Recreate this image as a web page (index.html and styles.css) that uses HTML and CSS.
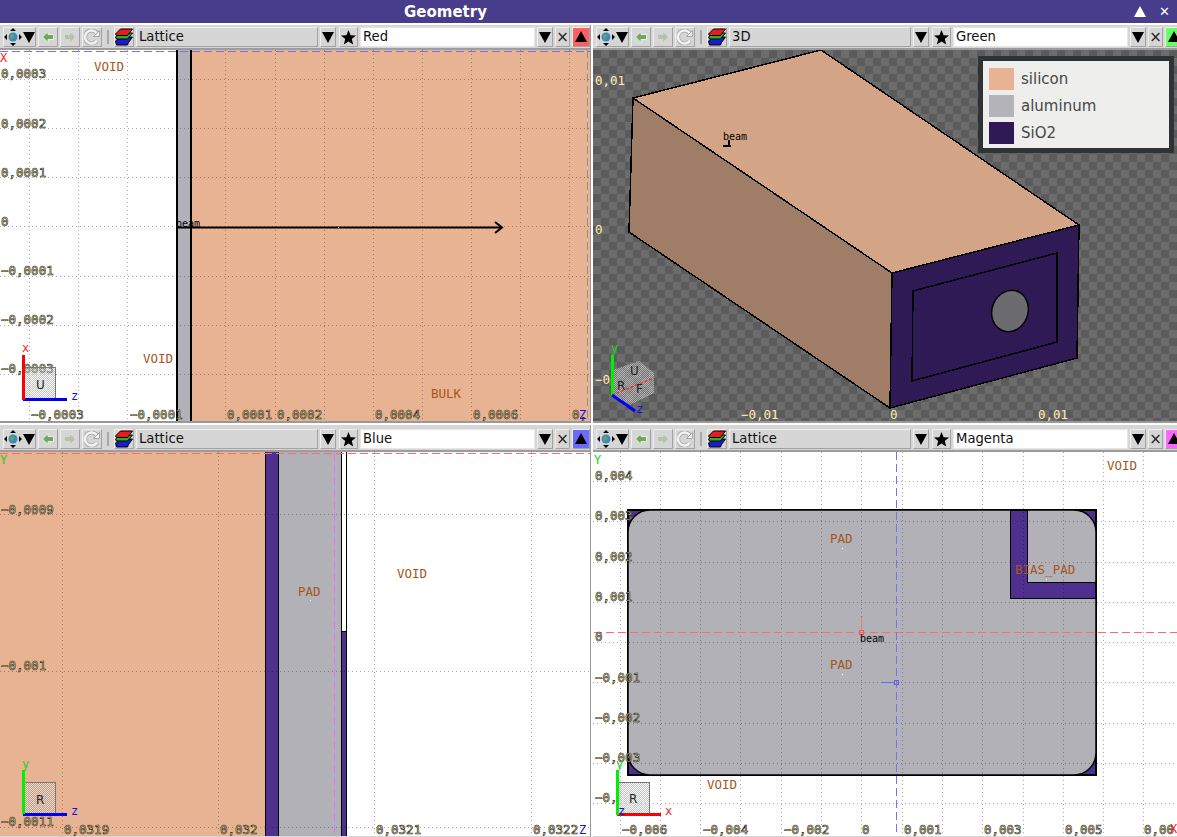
FILE: index.html
```html
<!DOCTYPE html>
<html lang="en">
<head>
  <meta charset="UTF-8">
  <title>Geometry</title>
  <link rel="stylesheet" href="styles.css">
</head>
<body>
  <!-- shared icons and fills -->
  <svg class="defs">
    <defs>
      <pattern id="checker" width="16" height="16" patternUnits="userSpaceOnUse" x="1" y="2">
        <rect class="check-a" width="16" height="16"/>
        <rect class="check-b" width="8" height="8"/>
        <rect class="check-b" x="8" y="8" width="8" height="8"/>
      </pattern>
      <pattern id="dither" width="2" height="2" patternUnits="userSpaceOnUse">
        <rect class="dither-a" width="1" height="1"/>
        <rect class="dither-a" x="1" y="1" width="1" height="1"/>
        <rect class="dither-b" x="1" width="1" height="1"/>
        <rect class="dither-b" y="1" width="1" height="1"/>
      </pattern>
      <symbol id="i-view" viewBox="0 0 18 18">
        <circle cx="9" cy="9" r="4.5" fill="#3f86c9"/>
        <path d="M6 7l3-1 2 2-2 2-1 2-2-3z" fill="#5fa85a"/>
        <path d="M9 0l3 3H6zM9 18l-3-3h6zM0 9l3-3v6zM18 9l-3 3V6z" fill="#000"/>
      </symbol>
      <symbol id="i-down" viewBox="0 0 12 12">
        <path d="M0 1h12L6 12z" fill="#000"/>
      </symbol>
      <symbol id="i-back" viewBox="0 0 12 12">
        <path d="M.5 6L6 .5V3.500h5.500v5H6v3z" fill="#6ea85c" stroke="#e8f0e4"/>
      </symbol>
      <symbol id="i-forward" viewBox="0 0 12 12">
        <path d="M11.500 6L6 .5V3.500H.5v5H6v3z" fill="#b4c4aa" stroke="#e4e4e4" stroke-dasharray="1 1"/>
      </symbol>
      <symbol id="i-refresh" viewBox="0 0 16 16">
        <path d="M13 11.500a6.500 6.500 0 1 1 0-7" fill="none" stroke="#a4a4a4" stroke-width="4"/>
        <path d="M13 11.500a6.500 6.500 0 1 1 0-7" fill="none" stroke="#f2f2f2" stroke-width="2.500"/>
        <path d="M9.500 7.500h6v-6z" fill="#f2f2f2" stroke="#a4a4a4"/>
      </symbol>
      <symbol id="i-layers" viewBox="0 0 18 18">
        <path d="M.5 13l5-4h12l-4 5.500-1 2.500H1.500z" fill="#1c1ccf" stroke="#000"/>
        <path d="M.5 9l5-4h12l-5 6H1.500z" fill="#22b522" stroke="#000"/>
        <path d="M.5 6l5-5h12l-5 6.500H1.500z" fill="#e81c1c" stroke="#000"/>
      </symbol>
      <symbol id="i-star" viewBox="0 0 16 16">
        <path d="M8 0l2.200 5.600 5.800.3-4.500 3.700 1.500 5.900L8 12.200 3 15.500l1.500-5.900L0 5.900l5.800-.3z" fill="#000"/>
      </symbol>
      <symbol id="i-up" viewBox="0 0 12 12">
        <path d="M0 11h12L6 0z" fill="#000"/>
      </symbol>
    </defs>
  </svg>

  <div class="window">
    <div class="titlebar">
      <span class="title">Geometry</span>
      <span class="win-btn win-up"></span>
      <span class="win-btn win-close">✕</span>
    </div>

    <div class="panes">

      <!-- Red view -->
      <section class="pane pane-top pane-left">
        <div class="toolbar">
          <button class="btn btn-view"><svg class="ico18"><use href="#i-view"/></svg><svg class="ico12"><use href="#i-down"/></svg></button>
          <button class="btn btn-nav"><svg class="ico12"><use href="#i-back"/></svg></button>
          <button class="btn btn-nav"><svg class="ico12"><use href="#i-forward"/></svg></button>
          <button class="btn btn-nav"><svg class="ico16"><use href="#i-refresh"/></svg></button>
          <span class="sep"></span>
          <button class="btn btn-nav"><svg class="ico18"><use href="#i-layers"/></svg></button>
          <div class="combo">Lattice</div>
          <button class="btn btn-arrow"><svg class="ico12"><use href="#i-down"/></svg></button>
          <button class="btn btn-star"><svg class="ico15"><use href="#i-star"/></svg></button>
          <div class="field">Red</div>
          <button class="btn btn-arrow"><svg class="ico12"><use href="#i-down"/></svg></button>
          <button class="btn btn-x">×</button>
          <button class="btn btn-color red"><svg class="ico12"><use href="#i-up"/></svg></button>
        </div>
        <svg class="canvas" viewBox="0 50 590 371">
          <rect class="white" x="0" y="50" width="590" height="371"/>
          <rect class="silicon" x="191" y="50" width="399" height="371"/>
          <rect class="alu" x="177" y="50" width="14" height="371"/>
          <path class="edge" d="M177 50V421M191 50V421"/>
          <path class="grid" d="M29.500 50V421M78.500 50V421M127.500 50V421M225.500 50V421M275.500 50V421M324.500 50V421M373.500 50V421M422.500 50V421M471.500 50V421M520.500 50V421M569.500 50V421M0 79.500H590M0 128.500H590M0 177.500H590M0 226.500H590M0 276.500H590M0 325.500H590M0 374.500H590"/>
          <path class="dash-blue" d="M0 51.500H590"/>
          <path class="dash-side" d="M587.500 50V421"/>
          <path class="arrow" d="M177 227.500H502M495 222l7 5.500-7 5.500"/>
          <rect class="point" x="338" y="227" width="1" height="1"/>
          <text class="beam" x="176" y="227">beam</text>
          <text class="axis-red" x="0" y="62">X</text>
          <text class="tick" x="1" y="78">0,0003</text>
          <text class="tick" x="1" y="128">0,0002</text>
          <text class="tick" x="1" y="177">0,0001</text>
          <text class="tick" x="1" y="226">0</text>
          <text class="tick" x="1" y="275">−0,0001</text>
          <text class="tick" x="1" y="324">−0,0002</text>
          <text class="tick" x="1" y="373">−0,0003</text>
          <text class="tick" x="31" y="419">−0,0003</text>
          <text class="tick" x="130" y="419">−0,0001</text>
          <text class="tick" x="227" y="419">0,0001</text>
          <text class="tick" x="277" y="419">0,0002</text>
          <text class="tick" x="375" y="419">0,0004</text>
          <text class="tick" x="473" y="419">0,0006</text>
          <text class="tick" x="572" y="419">0,</text>
          <text class="axis-blue" x="579" y="419">Z</text>
          <text class="region" x="94" y="71">VOID</text>
          <text class="region" x="143" y="363">VOID</text>
          <text class="region" x="431" y="398">BULK</text>
          <rect class="axis-box" x="23.500" y="367.500" width="32" height="32"/>
          <text class="axis-name" x="36" y="389">U</text>
          <rect class="fill-blue" x="23" y="398" width="44" height="3"/>
          <rect class="fill-red" x="22" y="355" width="3" height="45"/>
          <text class="axis-red" x="22" y="352">x</text>
          <text class="axis-blue" x="71" y="400">z</text>
        </svg>
      </section>

      <!-- Green view -->
      <section class="pane pane-top">
        <div class="toolbar">
          <button class="btn btn-view"><svg class="ico18"><use href="#i-view"/></svg><svg class="ico12"><use href="#i-down"/></svg></button>
          <button class="btn btn-nav"><svg class="ico12"><use href="#i-back"/></svg></button>
          <button class="btn btn-nav"><svg class="ico12"><use href="#i-forward"/></svg></button>
          <button class="btn btn-nav"><svg class="ico16"><use href="#i-refresh"/></svg></button>
          <span class="sep"></span>
          <button class="btn btn-nav"><svg class="ico18"><use href="#i-layers"/></svg></button>
          <div class="combo">3D</div>
          <button class="btn btn-arrow"><svg class="ico12"><use href="#i-down"/></svg></button>
          <button class="btn btn-star"><svg class="ico15"><use href="#i-star"/></svg></button>
          <div class="field">Green</div>
          <button class="btn btn-arrow"><svg class="ico12"><use href="#i-down"/></svg></button>
          <button class="btn btn-x">×</button>
          <button class="btn btn-color green"><svg class="ico12"><use href="#i-up"/></svg></button>
        </div>
        <div class="view3d">
          <svg class="canvas" viewBox="593 50 584 371">
            <rect class="checker" x="593" y="50" width="584" height="371"/>
            <path class="face-top" d="M633 98L821 50 1079 225 892 273z"/>
            <path class="face-left" d="M633 98L892 273 890 408 629 232z"/>
            <path class="face-right" d="M892 273L1079 225 1077 358 890 408z"/>
            <path class="edge-thin" d="M913 291L1057 253 1057 342 912 381z"/>
            <ellipse class="hole" cx="1010" cy="311" rx="18" ry="21" transform="rotate(20 1010 311)"/>
            <path class="edge-thin" d="M633 98L821 50 1079 225 892 273zM633 98L629 232 890 408 892 273M1079 225L1077 358 890 408"/>
            <text class="beam" x="723" y="140">beam</text>
            <path class="marker" d="M723 145.500H731M728.500 140V145"/>
            <text class="tick" x="595" y="85">0,01</text>
            <text class="tick" x="595" y="234">0</text>
            <text class="tick" x="595" y="384">−0</text>
            <text class="tick" x="741" y="419">−0,01</text>
            <text class="tick" x="890" y="419">0</text>
            <text class="tick" x="1038" y="419">0,01</text>
            <path class="axis-cube" d="M639 361L654 373 654 393 630 405 612 395 613 370z"/>
            <path class="cube-edge" d="M612 395L654 378"/>
            <text class="axis-name" x="630" y="375">U</text>
            <text class="axis-name" x="617" y="390">R</text>
            <text class="axis-name" x="636" y="393">F</text>
            <rect class="fill-green" x="611" y="355" width="3" height="41"/>
            <path class="line-blue" d="M612 395L635 411"/>
            <text class="axis-green" x="611" y="352">y</text>
            <text class="axis-blue" x="636" y="413">z</text>
          </svg>
          <div class="legend">
            <div class="legend-row"><span class="swatch swatch-si"></span>silicon</div>
            <div class="legend-row"><span class="swatch swatch-al"></span>aluminum</div>
            <div class="legend-row"><span class="swatch swatch-ox"></span>SiO2</div>
          </div>
        </div>
      </section>

      <!-- Blue view -->
      <section class="pane pane-low pane-left">
        <div class="toolbar">
          <button class="btn btn-view"><svg class="ico18"><use href="#i-view"/></svg><svg class="ico12"><use href="#i-down"/></svg></button>
          <button class="btn btn-nav"><svg class="ico12"><use href="#i-back"/></svg></button>
          <button class="btn btn-nav"><svg class="ico12"><use href="#i-forward"/></svg></button>
          <button class="btn btn-nav"><svg class="ico16"><use href="#i-refresh"/></svg></button>
          <span class="sep"></span>
          <button class="btn btn-nav"><svg class="ico18"><use href="#i-layers"/></svg></button>
          <div class="combo">Lattice</div>
          <button class="btn btn-arrow"><svg class="ico12"><use href="#i-down"/></svg></button>
          <button class="btn btn-star"><svg class="ico15"><use href="#i-star"/></svg></button>
          <div class="field">Blue</div>
          <button class="btn btn-arrow"><svg class="ico12"><use href="#i-down"/></svg></button>
          <button class="btn btn-x">×</button>
          <button class="btn btn-color blue"><svg class="ico12"><use href="#i-up"/></svg></button>
        </div>
        <svg class="canvas" viewBox="0 452 590 384">
          <rect class="white" x="0" y="452" width="590" height="384"/>
          <rect class="silicon" x="0" y="452" width="265" height="384"/>
          <rect class="oxide" x="265" y="452" width="14" height="384"/>
          <rect class="alu" x="279" y="452" width="62" height="384"/>
          <rect class="oxide" x="341" y="632" width="5" height="204"/>
          <path class="edge" d="M265.500 452V836M278.500 452V836M341.500 452V836M346.500 452V836M341 631.500H346"/>
          <path class="grid" d="M62.500 452V836M218.500 452V836M374.500 452V836M531.500 452V836M0 514.500H590M0 671.500H590M0 827.500H590"/>
          <path class="dash-red" d="M0 453.500H590"/>
          <path class="dash-magenta" d="M334.500 453V836"/>
          <rect class="point" x="310" y="600" width="1" height="1"/>
          <text class="axis-green" x="0" y="464">Y</text>
          <text class="tick" x="1" y="514">−0,0009</text>
          <text class="tick" x="1" y="670">−0,001</text>
          <text class="tick" x="1" y="826">−0,0011</text>
          <text class="tick" x="64" y="834">0,0319</text>
          <text class="tick" x="220" y="834">0,032</text>
          <text class="tick" x="376" y="834">0,0321</text>
          <text class="tick" x="533" y="834">0,0322</text>
          <text class="axis-blue" x="579" y="834">Z</text>
          <text class="region" x="298" y="596">PAD</text>
          <text class="region" x="397" y="578">VOID</text>
          <rect class="axis-box" x="23.500" y="782.500" width="32" height="31"/>
          <text class="axis-name" x="36" y="804">R</text>
          <rect class="fill-blue" x="23" y="813" width="44" height="3"/>
          <rect class="fill-green" x="22" y="770" width="3" height="44"/>
          <text class="axis-green" x="22" y="768">y</text>
          <text class="axis-blue" x="71" y="815">z</text>
        </svg>
      </section>

      <!-- Magenta view -->
      <section class="pane pane-low">
        <div class="toolbar">
          <button class="btn btn-view"><svg class="ico18"><use href="#i-view"/></svg><svg class="ico12"><use href="#i-down"/></svg></button>
          <button class="btn btn-nav"><svg class="ico12"><use href="#i-back"/></svg></button>
          <button class="btn btn-nav"><svg class="ico12"><use href="#i-forward"/></svg></button>
          <button class="btn btn-nav"><svg class="ico16"><use href="#i-refresh"/></svg></button>
          <span class="sep"></span>
          <button class="btn btn-nav"><svg class="ico18"><use href="#i-layers"/></svg></button>
          <div class="combo">Lattice</div>
          <button class="btn btn-arrow"><svg class="ico12"><use href="#i-down"/></svg></button>
          <button class="btn btn-star"><svg class="ico15"><use href="#i-star"/></svg></button>
          <div class="field">Magenta</div>
          <button class="btn btn-arrow"><svg class="ico12"><use href="#i-down"/></svg></button>
          <button class="btn btn-x">×</button>
          <button class="btn btn-color magenta"><svg class="ico12"><use href="#i-up"/></svg></button>
        </div>
        <svg class="canvas" viewBox="593 452 584 384">
          <rect class="white" x="593" y="452" width="584" height="384"/>
          <rect class="oxide-edge" x="628" y="510" width="468" height="265"/>
          <rect class="alu-edge" x="628" y="510" width="468" height="265" rx="22"/>
          <path class="pad-bias" d="M1010.500 510.500H1027.500V582.500H1095.500V598.500H1010.500z"/>
          <path class="grid" d="M620.500 452V836M660.500 452V836M700.500 452V836M740.500 452V836M781.500 452V836M821.500 452V836M861.500 452V836M902.500 452V836M942.500 452V836M982.500 452V836M1023.500 452V836M1063.500 452V836M1103.500 452V836M1143.500 452V836M593 481.500H1177M593 521.500H1177M593 562.500H1177M593 602.500H1177M593 642.500H1177M593 682.500H1177M593 723.500H1177M593 763.500H1177M593 803.500H1177"/>
          <path class="dash-red" d="M594 632.500H1177"/>
          <path class="dash-blue" d="M896.500 452V836"/>
          <rect class="mark-red" x="859.500" y="630.500" width="4" height="4"/>
          <path class="tick-red" d="M861.500 617V630"/>
          <rect class="mark-blue" x="894.500" y="680.500" width="4" height="4"/>
          <path class="tick-blue" d="M881 682.500H894"/>
          <rect class="point" x="842" y="548" width="1" height="1"/>
          <rect class="point" x="842" y="674" width="1" height="1"/>
          <rect class="point" x="1046" y="579" width="1" height="1"/>
          <text class="beam" x="860" y="642">beam</text>
          <text class="axis-green" x="594" y="464">Y</text>
          <text class="tick" x="595" y="480">0,004</text>
          <text class="tick" x="595" y="520">0,003</text>
          <text class="tick" x="595" y="561">0,002</text>
          <text class="tick" x="595" y="601">0,001</text>
          <text class="tick" x="595" y="641">0</text>
          <text class="tick" x="595" y="682">−0,001</text>
          <text class="tick" x="595" y="722">−0,002</text>
          <text class="tick" x="595" y="762">−0,003</text>
          <text class="tick" x="595" y="802">−0,</text>
          <text class="tick" x="622" y="834">−0,006</text>
          <text class="tick" x="703" y="834">−0,004</text>
          <text class="tick" x="784" y="834">−0,002</text>
          <text class="tick" x="862" y="834">0</text>
          <text class="tick" x="904" y="834">0,001</text>
          <text class="tick" x="984" y="834">0,003</text>
          <text class="tick" x="1065" y="834">0,005</text>
          <text class="tick" x="1144" y="834">0,00</text>
          <text class="axis-red" x="1170" y="833">X</text>
          <text class="region" x="1107" y="470">VOID</text>
          <text class="region" x="830" y="543">PAD</text>
          <text class="region" x="1015" y="574">BIAS_PAD</text>
          <text class="region" x="830" y="669">PAD</text>
          <text class="region" x="707" y="789">VOID</text>
          <rect class="axis-box" x="617.500" y="782.500" width="32" height="32"/>
          <text class="axis-name" x="629" y="803">R</text>
          <rect class="fill-red" x="617" y="813" width="44" height="3"/>
          <rect class="fill-green" x="616" y="770" width="3" height="45"/>
          <text class="axis-green" x="616" y="768">y</text>
          <text class="axis-red" x="665" y="815">x</text>
          <text class="axis-blue" x="618" y="815">z</text>
        </svg>
      </section>

    </div>
  </div>
</body>
</html>
```

FILE: styles.css
```css
* {
  box-sizing: border-box;
}
body {
  margin: 0;
  background: #fff;
  font-family: "DejaVu Sans", sans-serif;
  overflow: hidden;
}
.defs {
  display: block;
  width: 0;
  height: 0;
}
.window {
  width: 1177px;
  height: 837px;
  background: #fff;
  display: flex;
  flex-direction: column;
  overflow: hidden;
}

/* title bar */
.titlebar {
  height: 23px;
  margin-bottom: 2px;
  flex: none;
  background: #483d8b;
  color: #fff;
  display: flex;
  align-items: center;
  padding-left: 404px;
}
.title {
  font-weight: bold;
  font-size: 15px;
  flex: 1;
}
.win-btn {
  display: block;
}
.win-up {
  width: 0;
  height: 0;
  border-left: 6px solid transparent;
  border-right: 6px solid transparent;
  border-bottom: 11px solid #fff;
  margin-right: 13px;
}
.win-close {
  width: 15px;
  margin-right: 3px;
  font-size: 13px;
  font-weight: bold;
}

/* panes */
.panes {
  flex: 1;
  display: grid;
  grid-template-columns: 591px 584px;
  grid-template-rows: 398px 1fr;
  column-gap: 2px;
  row-gap: 2px;
}
.pane {
  display: flex;
  flex-direction: column;
  min-width: 0;
  min-height: 0;
  overflow: hidden;
}
.pane-top {
  border-bottom: 2px solid #999;
}
.pane-left {
  border-right: 1px solid #999;
}
.pane-low {
  padding-top: 2px;
  background: #d6d6d6;
  padding-bottom: 1px;
}

/* toolbar */
.toolbar {
  height: 25px;
  flex: none;
  background: #d6d6d6;
  border-bottom: 2px solid #9c9c9c;
  display: flex;
  align-items: stretch;
  padding: 2px 0 1px 3px;
  column-gap: 2px;
  overflow: hidden;
}
.btn {
  padding: 0;
  margin: 0;
  flex: none;
  background: #d6d6d6;
  border: 1px solid;
  border-color: #efefef #a2a2a2 #a2a2a2 #efefef;
  display: flex;
  align-items: center;
  justify-content: center;
}
.btn-view {
  width: 33px;
  column-gap: 1px;
}
.btn-nav {
  width: 20px;
}
.btn-arrow {
  width: 16px;
}
.btn-star {
  width: 19px;
  margin-left: 1px;
}
.btn-x {
  width: 15px;
  font: 15px/1 "DejaVu Sans", sans-serif;
  color: #222;
}
.btn-color {
  width: 18px;
  flex: none;
}
.red { background: #ff5f5f; }
.green { background: #66ff66; }
.blue { background: #6a6aff; }
.magenta { background: #ff66ff; }
.sep {
  width: 2px;
  flex: none;
  margin: 3px 3px 3px 3px;
  background: #a8a8a8;
}
.ico12 { width: 12px; height: 12px; }
.ico15 { width: 15px; height: 15px; }
.ico16 { width: 16px; height: 16px; }
.ico18 { width: 18px; height: 18px; }
.combo, .field {
  flex: none;
  font-size: 13.2px;
  line-height: 18px;
  padding-left: 2px;
  color: #111;
}
.combo {
  width: 182px;
  background: #d6d6d6;
  border: 1px solid;
  border-color: #efefef #a2a2a2 #a2a2a2 #efefef;
}
.field {
  width: 175px;
  background: #fff;
  border: 1px solid #e6e6e6;
}

/* drawing areas */
.canvas {
  display: block;
  flex: 1;
  min-height: 0;
  width: 100%;
}
.view3d {
  position: relative;
  flex: 1;
  min-height: 0;
  display: flex;
}
.legend {
  position: absolute;
  top: 6px;
  right: 3px;
  width: 196px;
  height: 97px;
  background: #eeeeec;
  border: 5px solid #2e3436;
  padding: 7px 0 0 6px;
  display: flex;
  flex-direction: column;
  row-gap: 5px;
  font-size: 15px;
  color: #444848;
}
.legend-row {
  display: flex;
  align-items: center;
  column-gap: 7px;
  height: 22px;
}
.swatch {
  width: 25px;
  height: 22px;
}
.swatch-si { background: #e8b392; }
.swatch-al { background: #b4b3b9; }
.swatch-ox { background: #2f1a55; }

/* svg fills */
.white { fill: #fff; }
.point { fill: #fff; }
.silicon { fill: #e8b392; }
.alu { fill: #b2b1b8; }
.oxide { fill: #50308e; }
.oxide-edge { fill: #50308e; stroke: #000; stroke-width: 1.500; shape-rendering: crispEdges; }
.alu-edge { fill: #b2b1b8; stroke: #000; stroke-width: 1.500; }
.pad-bias { fill: #50308e; stroke: #000; stroke-width: 1; shape-rendering: crispEdges; }
.edge { stroke: #000; stroke-width: 1.500; fill: none; shape-rendering: crispEdges; }
.edge-thin { stroke: #000; stroke-width: 1.500; fill: none; shape-rendering: crispEdges; }
.grid {
  stroke: rgba(0, 0, 0, 0.32);
  stroke-width: 1;
  stroke-dasharray: 1 3;
  fill: none;
  shape-rendering: crispEdges;
}
.dash-blue, .dash-red, .dash-magenta, .dash-side {
  fill: none;
  stroke-width: 1;
  stroke-dasharray: 8 4;
  shape-rendering: crispEdges;
}
.dash-blue { stroke: #7474f0; }
.dash-red { stroke: #ff6a6a; }
.dash-magenta { stroke: #ff66ff; stroke-width: 1.500; }
.dash-side { stroke: #9c8c80; }
.arrow { stroke: #000; stroke-width: 2; fill: none; }
.marker { stroke: #000; stroke-width: 2; fill: none; shape-rendering: crispEdges; }
.mark-red { fill: none; stroke: #ff5050; shape-rendering: crispEdges; }
.mark-blue { fill: none; stroke: #5c5cf0; shape-rendering: crispEdges; }
.tick-red { stroke: #ff7070; }
.tick-blue { stroke: #6a6af0; }
.fill-red { fill: #ff0000; }
.fill-green { fill: #00f000; }
.fill-blue { fill: #0000f0; }
.line-blue { stroke: #0000f0; stroke-width: 3; }
.cube-edge { stroke: #ff3030; stroke-width: 1.500; stroke-dasharray: 3 2; }
.checker { fill: url(#checker); }
.check-a { fill: #6c6c6c; }
.check-b { fill: #5b5b5b; }
.dither-a { fill: #fff; fill-opacity: 0.5; }
.dither-b { fill: #888; fill-opacity: 0.5; }
.face-top { fill: #d3a486; }
.face-left { fill: #9f7d66; }
.face-right { fill: #2f1a55; }
.hole { fill: #6c6c70; stroke: #000; stroke-width: 1.500; }
.axis-box { fill: url(#dither); stroke: #777; stroke-width: 1; shape-rendering: crispEdges; }
.axis-cube { fill: url(#dither); }

/* svg labels */
text {
  font-family: "DejaVu Sans Mono", monospace;
}
.tick {
  font-size: 12.500px;
  fill: #ffefb0;
  stroke: #1a1a10;
  stroke-width: 0.600;
}
.view3d .tick {
  stroke: none;
}
.region {
  font-size: 12.500px;
  fill: #a5561c;
}
.beam {
  font-size: 10px;
  fill: #000;
}
.axis-name {
  font-family: "DejaVu Sans", sans-serif;
  font-size: 12px;
  fill: #222;
}
.axis-red { font-size: 12px; fill: #ff2020; }
.axis-green { font-size: 12px; fill: #20d020; }
.axis-blue { font-size: 12px; fill: #1010f0; }
```
